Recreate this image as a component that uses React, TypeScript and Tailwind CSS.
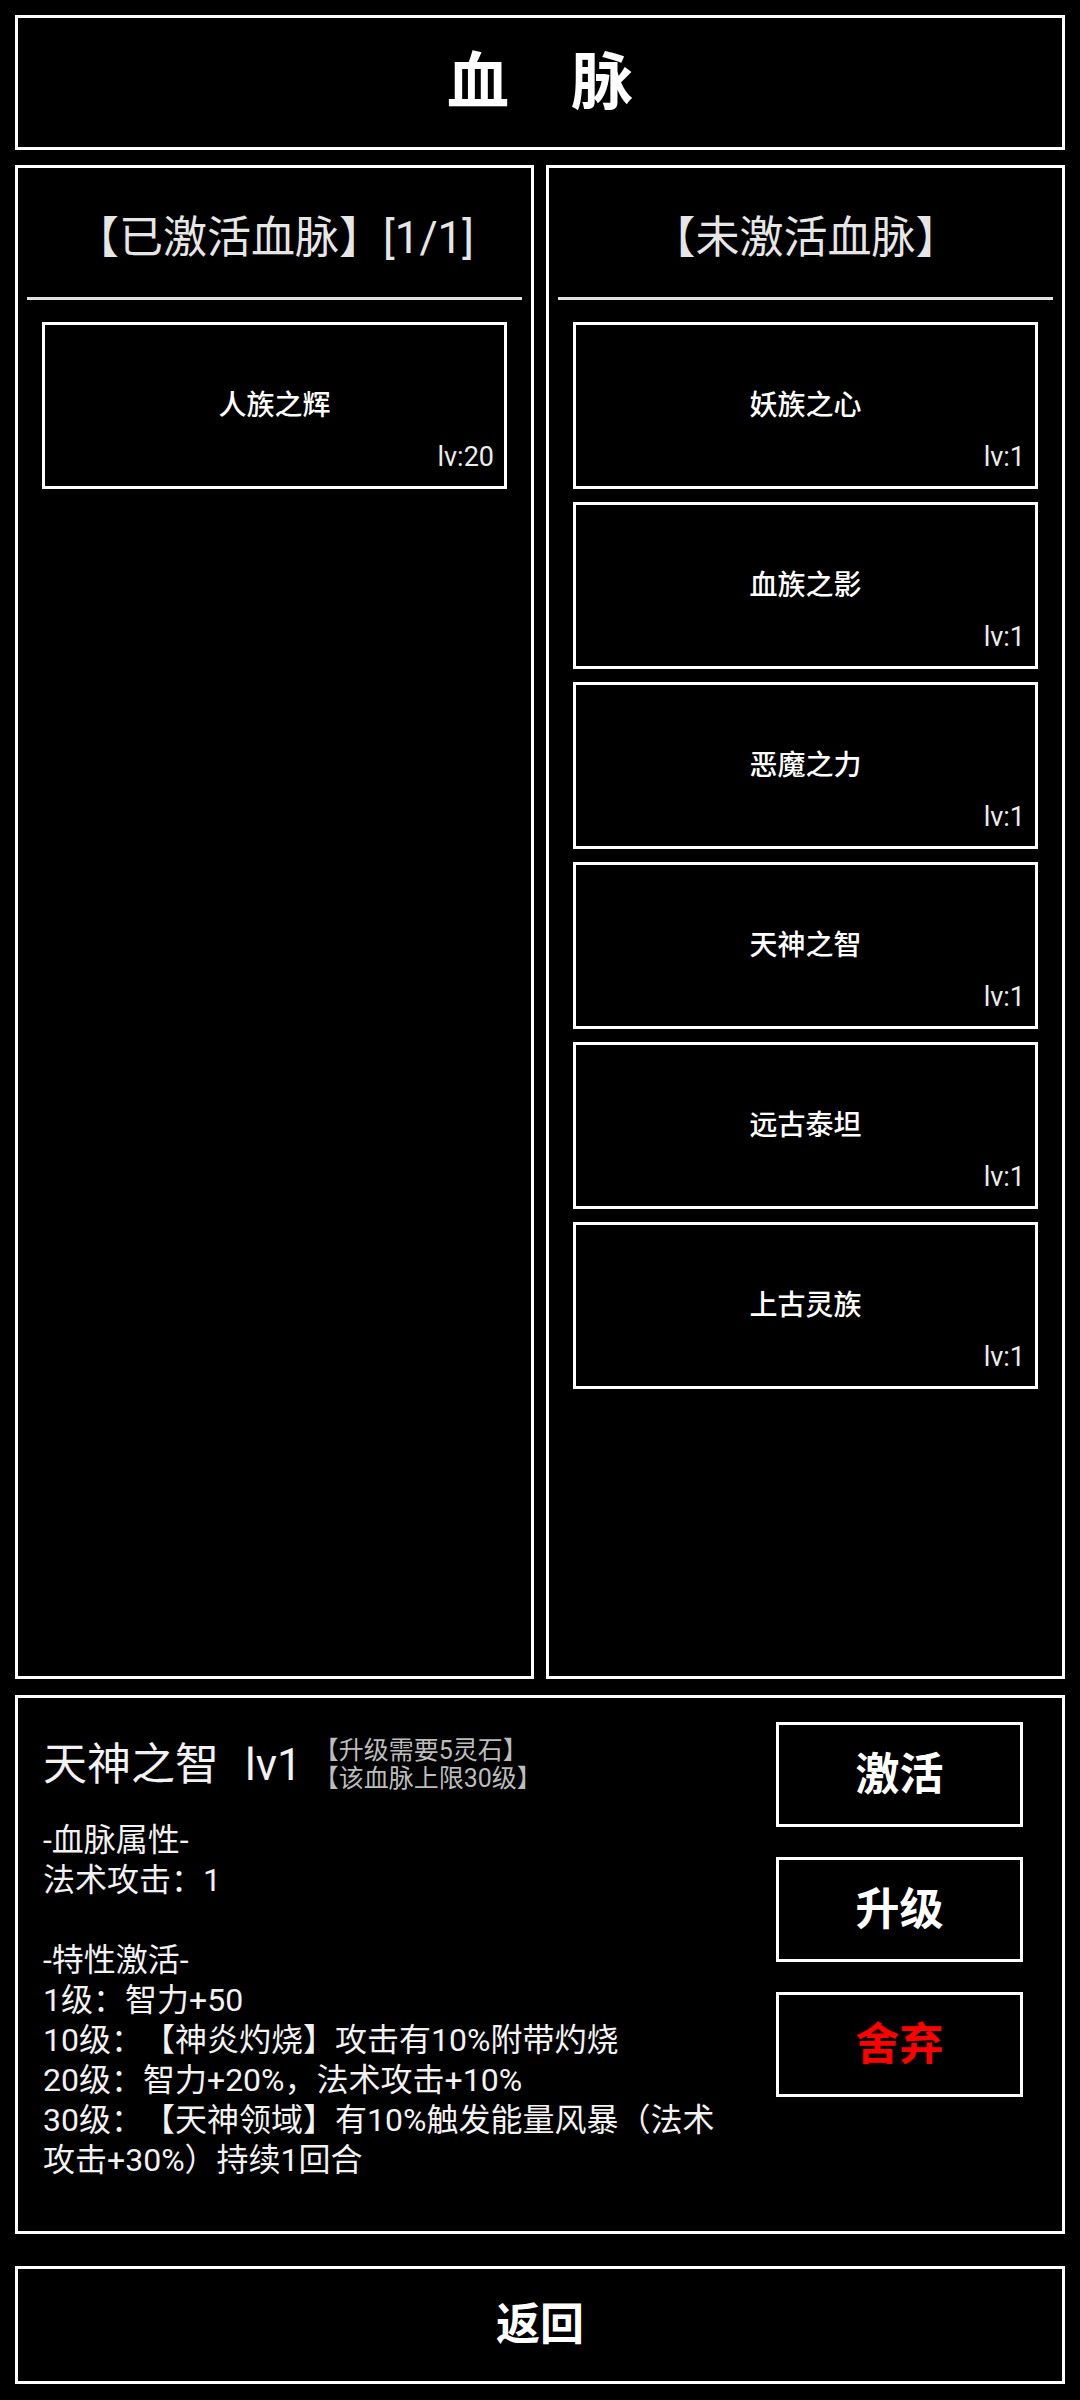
import React from "react";

type Bloodline = { name: string; level: number };

const active: Bloodline[] = [{ name: "人族之辉", level: 20 }];

const inactive: Bloodline[] = [
	{ name: "妖族之心", level: 1 },
	{ name: "血族之影", level: 1 },
	{ name: "恶魔之力", level: 1 },
	{ name: "天神之智", level: 1 },
	{ name: "远古泰坦", level: 1 },
	{ name: "上古灵族", level: 1 },
];

const details = [
	"-血脉属性-",
	"法术攻击：1",
	"",
	"-特性激活-",
	"1级：智力+50",
	"10级：【神炎灼烧】攻击有10%附带灼烧",
	"20级：智力+20%，法术攻击+10%",
	"30级：【天神领域】有10%触发能量风暴（法术攻击+30%）持续1回合",
];

function BloodlineCard({ item }: { item: Bloodline }) {
	return (
		<div className="relative h-[167px] border-[3px] border-white flex items-center justify-center">
			<span className="text-[28px] leading-none font-medium text-white">{item.name}</span>
			<span className="absolute right-[10px] bottom-[15px] text-[27px] leading-none text-[#ececec]">
				lv:{item.level}
			</span>
		</div>
	);
}

function Panel({ title, items }: { title: string; items: Bloodline[] }) {
	return (
		<div className="border-[3px] border-white flex flex-col">
			<div className="h-[129px] pt-[10px] flex items-center justify-center text-[44px] leading-none text-[#e6e6e6] whitespace-nowrap">
				{title}
			</div>
			<div className="mx-[9px] h-[3px] bg-[#e2e2e2]" />
			<div className="px-[24px] pt-[22px] flex flex-col gap-[13px]">
				{items.map((item) => (
					<BloodlineCard key={item.name} item={item} />
				))}
			</div>
		</div>
	);
}

function ActionButton({ label, danger }: { label: string; danger?: boolean }) {
	return (
		<button
			className={
				"w-[247px] h-[105px] border-[3px] border-white flex items-center justify-center text-[44px] font-bold leading-none " +
				(danger ? "text-[#ff0000]" : "text-white")
			}
		>
			{label}
		</button>
	);
}

export default function App() {
	return (
		<div
			className="w-[1080px] h-[2400px] bg-black text-white flex flex-col px-[15px] pt-[15px] pb-[16px] [text-spacing-trim:space-all]"
			style={{ fontFamily: 'Roboto, "Noto Sans CJK SC", sans-serif' }}
		>
			<div className="h-[135px] shrink-0 border-[3px] border-white flex items-center justify-center gap-[62px] text-[62px] font-bold leading-none">
				<span>血</span>
				<span>脉</span>
			</div>

			<div className="mt-[15px] h-[1514px] shrink-0 grid grid-cols-2 gap-[12px]">
				<Panel title="【已激活血脉】[1/1]" items={active} />
				<Panel title="【未激活血脉】" items={inactive} />
			</div>

			<div className="mt-[16px] h-[539px] shrink-0 border-[3px] border-white flex pl-[25px] pr-[39px]">
				<div className="w-[690px] pt-[39px]">
					<div className="flex items-center h-[56px]">
						<span className="text-[44px] leading-[56px] text-[#f2f2f2]">天神之智</span>
						<span className="ml-[26px] text-[44px] leading-[56px] text-[#f2f2f2]">lv1</span>
						<div className="ml-[12px] text-[25px] leading-[28px] text-[#bcbcbc] whitespace-nowrap">
							<div>【升级需要5灵石】</div>
							<div>【该血脉上限30级】</div>
						</div>
					</div>
					<div className="mt-[27px] text-[32px] leading-[40px] text-[#f2f2f2]">
						{details.map((line, i) => (
							<div key={i} className="min-h-[40px]">
								{line}
							</div>
						))}
					</div>
				</div>
				<div className="ml-auto pt-[24px] flex flex-col gap-[30px]">
					<ActionButton label="激活" />
					<ActionButton label="升级" />
					<ActionButton label="舍弃" danger />
				</div>
			</div>

			<div className="mt-[32px] h-[118px] shrink-0 border-[3px] border-white flex items-center justify-center text-[44px] font-bold leading-none">
				返回
			</div>
		</div>
	);
}
